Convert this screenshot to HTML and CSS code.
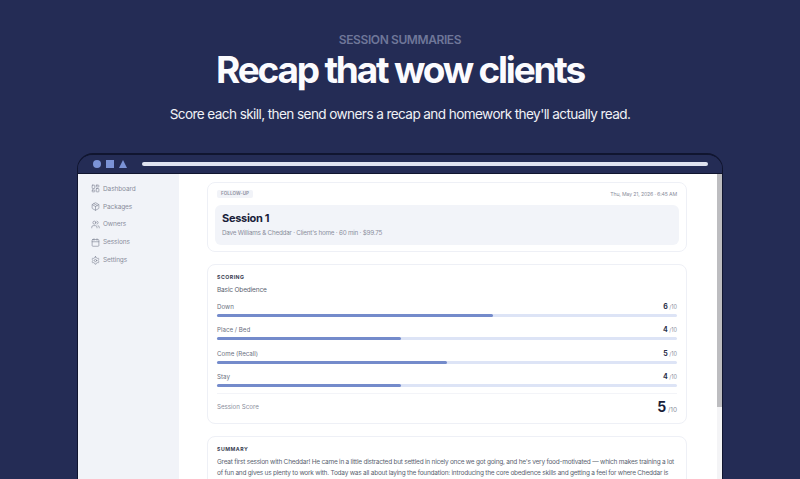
FILE: index.html
```html
<!DOCTYPE html>
<html lang="en">
<head>
    <meta charset="UTF-8">
    <meta name="viewport" content="width=device-width, initial-scale=1.0">
    <title>Session Summaries</title>
    <link rel="stylesheet" href="styles.css">
</head>
<body>
    <header class="hero">
        <p class="eyebrow">SESSION SUMMARIES</p>
        <h1>Recap that wow clients</h1>
        <p class="lead">Score each skill, then send owners a recap and homework they'll actually read.</p>
    </header>

    <div class="window">
        <div class="titlebar">
            <span class="shape circle"></span>
            <span class="shape square"></span>
            <span class="shape triangle"></span>
            <span class="address"></span>
        </div>
        <div class="app">
            <nav class="sidebar">
                <a class="nav-item">
                    <svg viewBox="0 0 24 24"><rect x="3" y="3" width="7" height="9" rx="1.5"/><rect x="14" y="3" width="7" height="5" rx="1.5"/><rect x="14" y="12" width="7" height="9" rx="1.5"/><rect x="3" y="16" width="7" height="5" rx="1.5"/></svg>
                    Dashboard
                </a>
                <a class="nav-item">
                    <svg viewBox="0 0 24 24"><path d="M21 8a2 2 0 0 0-1-1.7l-7-4a2 2 0 0 0-2 0l-7 4A2 2 0 0 0 3 8v8a2 2 0 0 0 1 1.7l7 4a2 2 0 0 0 2 0l7-4a2 2 0 0 0 1-1.7Z"/><path d="M3.3 7 12 12l8.7-5"/><path d="M12 22V12"/><path d="m7.5 4.3 9 5.2"/></svg>
                    Packages
                </a>
                <a class="nav-item">
                    <svg viewBox="0 0 24 24"><path d="M16 21v-2a4 4 0 0 0-4-4H6a4 4 0 0 0-4 4v2"/><circle cx="9" cy="7" r="4"/><path d="M22 21v-2a4 4 0 0 0-3-3.9"/><path d="M16 3.1a4 4 0 0 1 0 7.8"/></svg>
                    Owners
                </a>
                <a class="nav-item">
                    <svg viewBox="0 0 24 24"><rect x="3" y="4" width="18" height="18" rx="2"/><path d="M16 2v4M8 2v4M3 10h18"/></svg>
                    Sessions
                </a>
                <a class="nav-item">
                    <svg viewBox="0 0 24 24"><path d="M12.2 2h-.4a2 2 0 0 0-2 2v.2a2 2 0 0 1-1 1.7l-.4.3a2 2 0 0 1-2 0l-.2-.1a2 2 0 0 0-2.7.7l-.2.4a2 2 0 0 0 .7 2.7l.2.1a2 2 0 0 1 1 1.7v.5a2 2 0 0 1-1 1.8l-.2.1a2 2 0 0 0-.7 2.7l.2.4a2 2 0 0 0 2.7.7l.2-.1a2 2 0 0 1 2 0l.4.3a2 2 0 0 1 1 1.7v.2a2 2 0 0 0 2 2h.4a2 2 0 0 0 2-2v-.2a2 2 0 0 1 1-1.7l.4-.3a2 2 0 0 1 2 0l.2.1a2 2 0 0 0 2.7-.7l.2-.4a2 2 0 0 0-.7-2.7l-.2-.1a2 2 0 0 1-1-1.8v-.5a2 2 0 0 1 1-1.7l.2-.1a2 2 0 0 0 .7-2.7l-.2-.4a2 2 0 0 0-2.7-.7l-.2.1a2 2 0 0 1-2 0l-.4-.3a2 2 0 0 1-1-1.7V4a2 2 0 0 0-2-2Z"/><circle cx="12" cy="12" r="3"/></svg>
                    Settings
                </a>
            </nav>

            <main class="content">
                <section class="card session-card">
                    <div class="session-top">
                        <span class="tag">FOLLOW-UP</span>
                        <span class="date">Thu, May 21, 2026 · 6:45 AM</span>
                    </div>
                    <div class="session-panel">
                        <h2>Session 1</h2>
                        <p>Dave Williams &amp; Cheddar · Client's home · 60 min · $99.75</p>
                    </div>
                </section>

                <section class="card scoring-card">
                    <h3>SCORING</h3>
                    <p class="program">Basic Obedience</p>
                    <div class="skill">
                        <div class="skill-row"><span>Down</span><span class="score"><b>6</b> /10</span></div>
                        <div class="track"><div class="fill" style="width: 60%"></div></div>
                    </div>
                    <div class="skill">
                        <div class="skill-row"><span>Place / Bed</span><span class="score"><b>4</b> /10</span></div>
                        <div class="track"><div class="fill" style="width: 40%"></div></div>
                    </div>
                    <div class="skill">
                        <div class="skill-row"><span>Come (Recall)</span><span class="score"><b>5</b> /10</span></div>
                        <div class="track"><div class="fill" style="width: 50%"></div></div>
                    </div>
                    <div class="skill">
                        <div class="skill-row"><span>Stay</span><span class="score"><b>4</b> /10</span></div>
                        <div class="track"><div class="fill" style="width: 40%"></div></div>
                    </div>
                    <div class="total">
                        <span>Session Score</span>
                        <span class="total-score"><b>5</b> /10</span>
                    </div>
                </section>

                <section class="card summary-card">
                    <h3>SUMMARY</h3>
                    <p>Great first session with Cheddar! He came in a little distracted but settled in nicely once we got going, and he's very food-motivated — which makes training a lot of fun and gives us plenty to work with. Today was all about laying the foundation: introducing the core obedience skills and getting a feel for where Cheddar is</p>
                </section>
            </main>
            <div class="scrollbar"><div class="thumb"></div></div>
        </div>
    </div>
</body>
</html>
```

FILE: styles.css
```css
html, body {
    height: 100%;
}
body {
    margin: 0;
    overflow: hidden;
    background-color: #242c55;
    font-family: Inter, "Noto Sans", sans-serif;
    color: #6b7080;
}
h1, h2, h3, p {
    margin: 0;
}
.hero {
    height: 153px;
    padding-top: 33px;
    box-sizing: border-box;
    text-align: center;
}
.eyebrow {
    font-size: 12px;
    line-height: 14px;
    font-weight: 600;
    letter-spacing: -0.4px;
    color: #6f7799;
}
.hero h1 {
    margin-top: 1px;
    font-size: 37px;
    line-height: 44px;
    font-weight: 700;
    letter-spacing: -2.2px;
    color: #fbfbfe;
}
.lead {
    margin-top: 13px;
    font-size: 13.6px;
    line-height: 18px;
    letter-spacing: -0.6px;
    color: #f0f1f6;
}
.window {
    width: 646px;
    height: 326px;
    margin: 0 auto;
    box-sizing: border-box;
    border: 1px solid #10152f;
    border-top-width: 2px;
    border-bottom: none;
    border-radius: 16px 16px 0 0;
    overflow: hidden;
    display: flex;
    flex-direction: column;
}
.titlebar {
    flex: none;
    height: 18px;
    padding: 0 14px 0 15px;
    display: flex;
    align-items: center;
    gap: 5px;
    background-color: #242c55;
    border-bottom: 1px solid #10152f;
}
.shape {
    flex: none;
    width: 8px;
    height: 8px;
    background-color: #7b93d6;
}
.circle {
    border-radius: 50%;
}
.triangle {
    background: none;
    width: 0;
    height: 0;
    border-left: 4px solid transparent;
    border-right: 4px solid transparent;
    border-bottom: 8px solid #7b93d6;
}
.address {
    flex: 1;
    height: 4px;
    margin-left: 10px;
    border-radius: 2px;
    background-color: #dfe3f0;
}
.app {
    flex: 1;
    min-height: 0;
    display: flex;
    background-color: #fff;
}
.sidebar {
    flex: none;
    width: 101px;
    padding-top: 6px;
    box-sizing: border-box;
    background-color: #f1f3f8;
}
.nav-item {
    height: 17.8px;
    padding-left: 13px;
    display: flex;
    align-items: center;
    gap: 3px;
    font-size: 6.5px;
    letter-spacing: -0.1px;
    color: #8a8e9c;
}
.nav-item svg {
    width: 9px;
    height: 9px;
    fill: none;
    stroke: #7b8090;
    stroke-width: 1.6;
    stroke-linecap: round;
    stroke-linejoin: round;
}
.content {
    flex: 1;
    min-width: 0;
    padding: 8px 30px 0 28px;
}
.card {
    border: 1px solid #eef0f6;
    border-radius: 8px;
    margin-bottom: 12px;
    box-sizing: border-box;
}
.session-card {
    height: 70px;
    padding: 6px 7px;
}
.session-top {
    height: 15px;
    display: flex;
    justify-content: space-between;
    align-items: flex-start;
    padding: 1px 2px 0;
}
.tag {
    padding: 1px 4px;
    border-radius: 2px;
    background-color: #f1f3f8;
    font-size: 4.5px;
    line-height: 6px;
    font-weight: 600;
    letter-spacing: 0.1px;
    color: #8a8e9c;
}
.date {
    font-size: 5.2px;
    line-height: 8px;
    letter-spacing: -0.15px;
    color: #8a8e9c;
}
.session-panel {
    height: 40px;
    padding: 6px 7px;
    box-sizing: border-box;
    border-radius: 6px;
    background-color: #f2f4f9;
}
.session-panel h2 {
    font-size: 11px;
    line-height: 14px;
    font-weight: 700;
    letter-spacing: -0.3px;
    color: #1a1e3a;
}
.session-panel p {
    margin-top: 4px;
    font-size: 6.3px;
    line-height: 9px;
    letter-spacing: -0.22px;
    color: #8a8e9c;
}
.scoring-card {
    height: 160px;
    padding: 8px 9px;
}
h3 {
    font-size: 5.2px;
    line-height: 9px;
    font-weight: 700;
    letter-spacing: 0.5px;
    color: #3a3e52;
}
.program {
    margin-top: 4px;
    font-size: 6.5px;
    line-height: 8px;
    letter-spacing: -0.15px;
    color: #5a5f70;
}
.skill {
    margin-top: 7.2px;
    height: 16px;
}
.skill-row {
    height: 11px;
    display: flex;
    justify-content: space-between;
    align-items: center;
    font-size: 6.2px;
    color: #6b7080;
}
.score {
    font-size: 5.5px;
    color: #8a8e9c;
}
.score b {
    font-size: 7px;
    color: #2a2e48;
}
.track {
    height: 3px;
    margin-top: 2px;
    border-radius: 2px;
    background-color: #dde4f6;
}
.fill {
    height: 100%;
    border-radius: 2px;
    background-color: #748bcb;
}
.total {
    margin-top: 6px;
    padding-top: 2px;
    border-top: 1px solid #f3f4f8;
    display: flex;
    justify-content: space-between;
    align-items: center;
    font-size: 6.2px;
    color: #8a8e9c;
}
.total-score {
    font-size: 6.5px;
}
.total-score b {
    font-size: 14px;
    line-height: 22px;
    color: #1a1e3a;
}
.summary-card {
    padding: 8px 9px;
}
.summary-card p {
    margin-top: 3px;
    font-size: 6.5px;
    line-height: 11.3px;
    letter-spacing: -0.23px;
    color: #5a5f70;
}
.scrollbar {
    flex: none;
    width: 5px;
    background-color: #f4f4f6;
}
.thumb {
    height: 233px;
    background-color: #bdbdc0;
}
```
